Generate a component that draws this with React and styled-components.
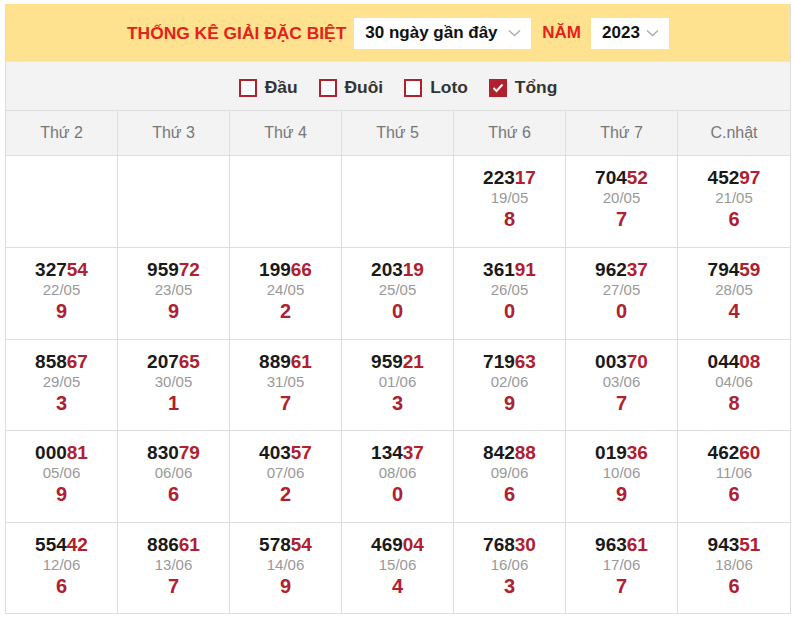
import React from "react";
import styled, { createGlobalStyle } from "styled-components";

const Global = createGlobalStyle`
  html, body { margin: 0; padding: 0; background: #fff; }
  body { font-family: Arial, "Liberation Sans", sans-serif; }
`;

const Wrap = styled.div`
  margin: 4px 0 0 5px;
  width: 786px;
  border-left: 1px solid #ddd;
  border-right: 1px solid #ddd;
  box-sizing: border-box;
`;

const Top = styled.div`
  background: #ffe28f;
  height: 58px;
  display: flex;
  align-items: center;
  justify-content: center;
  border-bottom: 1px solid #e6e6e6;
  padding-top: 1px;
  box-sizing: border-box;
`;

const Title = styled.span`
  color: #e3221b;
  font-weight: bold;
  font-size: 17.4px;
  margin-right: 8px;
`;

const Select = styled.div`
  background: #fff;
  height: 31px;
  display: flex;
  align-items: center;
  padding: 0 10px 0 11px;
  font-size: 17px;
  font-weight: bold;
  color: #111;
  box-sizing: border-box;
  width: ${(p) => p.$w}px;
  justify-content: space-between;
`;

const Year = styled.span`
  color: #e3221b;
  font-weight: bold;
  font-size: 17px;
  margin: 0 10px 0 11px;
`;

const Filters = styled.div`
  background: #f3f3f3;
  height: 49px;
  display: flex;
  align-items: center;
  justify-content: center;
  gap: 21px;
  border-bottom: 1px solid #dedede;
  padding: 3px 0 0 0;
  box-sizing: border-box;
`;

const Opt = styled.label`
  display: flex;
  align-items: center;
  gap: 8px;
  font-size: 17.4px;
  font-weight: bold;
  color: #333;
`;

const Box = styled.span`
  width: 18px;
  height: 18px;
  box-sizing: border-box;
  border: 2px solid #b0202e;
  background: ${(p) => (p.$on ? "#b0202e" : "#fff")};
  display: flex;
  align-items: center;
  justify-content: center;
`;

const Grid = styled.div`
  display: grid;
  grid-template-columns: repeat(7, 1fr);
  grid-template-rows: 45px 92px 92px 91px 92px 91px;
`;

const Head = styled.div`
  background: #f3f3f3;
  box-sizing: border-box;
  display: flex;
  align-items: center;
  justify-content: center;
  color: #777;
  font-size: 16px;
  border-bottom: 1px solid #dedede;
  border-right: 1px solid #dedede;
  &:nth-child(7n) { border-right: none; }
`;

const Cell = styled.div`
  border-bottom: 1px solid #dedede;
  border-right: 1px solid #dedede;
  &:nth-child(7n) { border-right: none; }
  display: flex;
  flex-direction: column;
  align-items: center;
  padding-top: 11px;
  box-sizing: border-box;
`;

const Num = styled.div`
  font-size: 19px;
  font-weight: bold;
  color: #1a1a1a;
  line-height: 21px;
  span { color: #b0202e; }
`;

const DateT = styled.div`
  font-size: 15px;
  color: #999;
  line-height: 20px;
`;

const Sum = styled.div`
  font-size: 20px;
  font-weight: bold;
  color: #b0202e;
  line-height: 23px;
`;

const Chevron = () => (
  <svg width="13" height="8" viewBox="0 0 13 8">
    <path d="M1 1.5 L6.5 6.5 L12 1.5" fill="none" stroke="#aaa" strokeWidth="1.3" />
  </svg>
);

const data = [
  null, null, null, null,
  ["22317", "19/05", 8], ["70452", "20/05", 7], ["45297", "21/05", 6],
  ["32754", "22/05", 9], ["95972", "23/05", 9], ["19966", "24/05", 2], ["20319", "25/05", 0], ["36191", "26/05", 0], ["96237", "27/05", 0], ["79459", "28/05", 4],
  ["85867", "29/05", 3], ["20765", "30/05", 1], ["88961", "31/05", 7], ["95921", "01/06", 3], ["71963", "02/06", 9], ["00370", "03/06", 7], ["04408", "04/06", 8],
  ["00081", "05/06", 9], ["83079", "06/06", 6], ["40357", "07/06", 2], ["13437", "08/06", 0], ["84288", "09/06", 6], ["01936", "10/06", 9], ["46260", "11/06", 6],
  ["55442", "12/06", 6], ["88661", "13/06", 7], ["57854", "14/06", 9], ["46904", "15/06", 4], ["76830", "16/06", 3], ["96361", "17/06", 7], ["94351", "18/06", 6],
];

const days = ["Thứ 2", "Thứ 3", "Thứ 4", "Thứ 5", "Thứ 6", "Thứ 7", "C.nhật"];
const opts = [["Đầu", false], ["Đuôi", false], ["Loto", false], ["Tổng", true]];

export default function App() {
  return (
    <>
      <Global />
      <Wrap>
        <Top>
          <Title>THỐNG KÊ GIẢI ĐẶC BIỆT</Title>
          <Select $w={177}>30 ngày gần đây <Chevron /></Select>
          <Year>NĂM</Year>
          <Select $w={78}>2023 <Chevron /></Select>
        </Top>
        <Filters>
          {opts.map(([t, on]) => (
            <Opt key={t}>
              <Box $on={on}>
                {on && (
                  <svg width="12" height="10" viewBox="0 0 12 10">
                    <path d="M1.5 5 L4.5 8 L10.5 1.5" fill="none" stroke="#fff" strokeWidth="2" />
                  </svg>
                )}
              </Box>
              {t}
            </Opt>
          ))}
        </Filters>
        <Grid>
          {days.map((d) => (
            <Head key={d}>{d}</Head>
          ))}
          {data.map((c, i) => (
            <Cell key={i}>
              {c && (
                <>
                  <Num>
                    {c[0].slice(0, 3)}
                    <span>{c[0].slice(3)}</span>
                  </Num>
                  <DateT>{c[1]}</DateT>
                  <Sum>{c[2]}</Sum>
                </>
              )}
            </Cell>
          ))}
        </Grid>
      </Wrap>
    </>
  );
}
